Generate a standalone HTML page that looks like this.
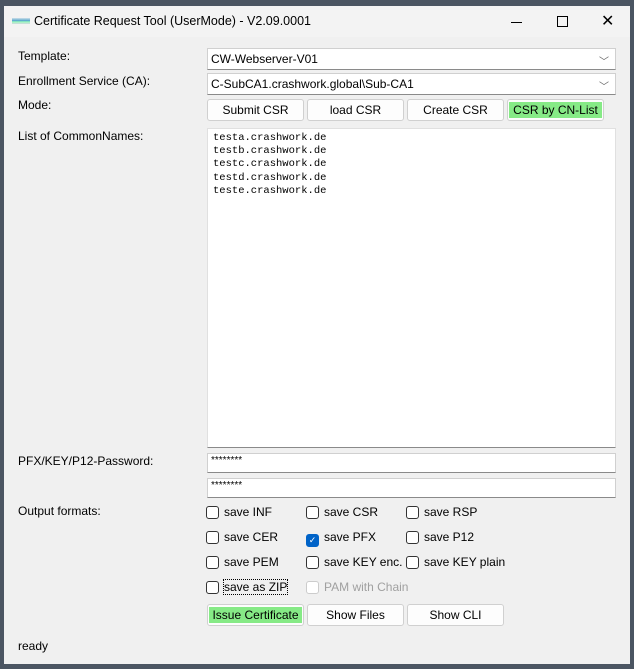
<!DOCTYPE html>
<html><head><style>
body{margin:0;width:634px;height:669px;background:#4b5562;position:relative;overflow:hidden;font-family:"Liberation Sans",sans-serif;font-size:12px;color:#000}
.win{position:absolute;left:4px;top:6px;width:626px;height:658px;background:#f0f0f0}
.title{position:absolute;left:0;top:0;width:626px;height:31px;background:#f3f3f3}
.a{position:absolute}
.lbl{position:absolute;left:14px;font-size:12px}
.box{position:absolute;background:#fff;border:1px solid #d0d0d0;border-bottom:1px solid #8a8a8a;box-sizing:border-box}
.combo{height:22px;padding:3px 0 0 3px}
.chev{position:absolute;right:6px;top:4px;color:#666;font-size:10px}
.btn{position:absolute;height:22px;width:97px;box-sizing:border-box;border:1px solid #d0d0d0;border-radius:3px;background:#fdfdfd;text-align:center;line-height:20px}
.btn.g span{display:block;margin:2px 1px;background:#86ea86;line-height:16px}
.cb{position:absolute;height:16px;line-height:14px}
.cb i{display:inline-block;width:11px;height:11px;border:1px solid #333;border-radius:3px;vertical-align:-3px;margin-right:5px;box-sizing:content-box;background:#fff;font-style:normal}
.mono{font-family:"Liberation Mono",monospace;font-size:10.5px;line-height:13.2px}
</style></head><body>
<div class="win">
<div class="title">
 <div class="a" style="left:8px;top:12px;width:18px;height:6px;background:linear-gradient(#cfe0ea,#4aa0c8 50%,#9fb 60%,#cfd8de)"></div>
 <div class="a" style="left:30px;top:8px;font-size:12.5px">Certificate Request Tool (UserMode) - V2.09.0001</div>
 <div class="a" style="left:507px;top:16px;width:11px;height:1px;background:#000"></div>
 <div class="a" style="left:553px;top:10px;width:9px;height:9px;border:1px solid #000"></div>
 <div class="a" style="left:597px;top:5px;font-size:16px;font-weight:300">✕</div>
</div>
<div class="lbl" style="top:43px">Template:</div>
<div class="lbl" style="top:68px">Enrollment Service (CA):</div>
<div class="lbl" style="top:92px">Mode:</div>
<div class="lbl" style="top:123px">List of CommonNames:</div>
<div class="lbl" style="top:448px">PFX/KEY/P12-Password:</div>
<div class="lbl" style="top:498px">Output formats:</div>
<div class="box combo" style="left:203px;top:42px;width:409px">CW-Webserver-V01<span class="chev">﹀</span></div>
<div class="box combo" style="left:203px;top:67px;width:409px">C-SubCA1.crashwork.global\Sub-CA1<span class="chev">﹀</span></div>
<div class="btn" style="left:203px;top:93px">Submit CSR</div>
<div class="btn" style="left:303px;top:93px">load CSR</div>
<div class="btn" style="left:403px;top:93px">Create CSR</div>
<div class="btn g" style="left:503px;top:93px"><span>CSR by CN-List</span></div>
<div class="box mono" style="left:203px;top:122px;width:409px;height:320px;padding:3px 5px;border-color:#e0e0e0;border-bottom-color:#8a8a8a">testa.crashwork.de<br>testb.crashwork.de<br>testc.crashwork.de<br>testd.crashwork.de<br>teste.crashwork.de</div>
<div class="box" style="left:203px;top:447px;width:409px;height:20px;font-size:10px;padding:1px 3px">********</div>
<div class="box" style="left:203px;top:472px;width:409px;height:20px;font-size:10px;padding:1px 3px">********</div>
<div class="cb" style="left:202px;top:499px"><i></i>save INF</div>
<div class="cb" style="left:302px;top:499px"><i></i>save CSR</div>
<div class="cb" style="left:402px;top:499px"><i></i>save RSP</div>
<div class="cb" style="left:202px;top:524px"><i></i>save CER</div>
<div class="cb" style="left:302px;top:524px"><i style="background:#0063c8;border-color:#0063c8;color:#fff;font-size:9px;line-height:11px;text-align:center;vertical-align:-2px">✓</i>save PFX</div>
<div class="cb" style="left:402px;top:524px"><i></i>save P12</div>
<div class="cb" style="left:202px;top:549px"><i></i>save PEM</div>
<div class="cb" style="left:302px;top:549px"><i></i>save KEY enc.</div>
<div class="cb" style="left:402px;top:549px"><i></i>save KEY plain</div>
<div class="cb" style="left:202px;top:574px"><i></i><span style="outline:1px dotted #000">save as ZIP</span></div>
<div class="cb" style="left:302px;top:574px;color:#a0a0a0"><i style="border-color:#ccc"></i>PAM with Chain</div>
<div class="btn g" style="left:203px;top:598px"><span>Issue Certificate</span></div>
<div class="btn" style="left:303px;top:598px">Show Files</div>
<div class="btn" style="left:403px;top:598px">Show CLI</div>
<div class="lbl" style="top:633px">ready</div>
</div>
</body></html>
